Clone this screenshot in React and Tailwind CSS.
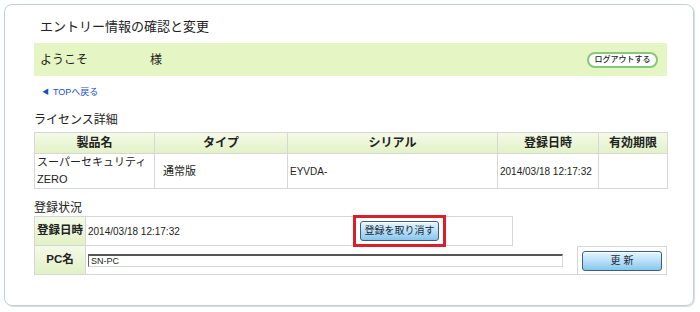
import React from 'react';

const font = { fontFamily: '"Liberation Sans", "Noto Sans CJK JP", sans-serif' };

const cols = [
  { label: '製品名', w: 'w-[120px]' },
  { label: 'タイプ', w: 'w-[133px]' },
  { label: 'シリアル', w: 'w-[210px]' },
  { label: '登録日時', w: 'w-[101px]' },
  { label: '有効期限', w: 'w-[69px]' },
];

const BlueButton = ({ children, className = '' }) => (
  <button
    className={`h-[20px] rounded-[3px] border border-[#3d5f7e] bg-gradient-to-b from-[#e4f4ff] via-[#b9e0f8] to-[#86c6ec] text-[10px] leading-none text-[#1d2a36] shadow-[inset_0_1px_0_#ffffff] ${className}`}
  >
    {children}
  </button>
);

export default function App() {
  return (
    <div className="min-h-[312px] w-[700px] bg-white pl-[4px] pt-[4px] text-[#222]" style={font}>
      <div className="h-[302px] w-[690px] rounded-[8px] border border-[#c3cfd7] pl-[29px] pt-[12px] shadow-[1px_1px_1px_#d5dde2]">
        {/* heading */}
        <h1 className="pl-[6px] text-[13px] leading-[20px]">エントリー情報の確認と変更</h1>

        {/* welcome bar */}
        <div className="mt-[6px] flex h-[33px] w-[633px] items-center justify-between bg-[#e5f5c4] pl-[6px] pr-[9px]">
          <div className="flex text-[12px]">
            <span className="w-[110px]">ようこそ</span>
            <span>様</span>
          </div>
          <button className="flex h-[16px] w-[71px] items-center justify-center rounded-full border-2 border-[#86c77e] bg-white text-[8px] font-medium leading-none text-[#222]">
            ログアウトする
          </button>
        </div>

        {/* back link */}
        <a className="mt-[10px] flex items-center gap-[4px] pl-[8px] text-[9px] leading-[12px] text-[#1b4fbf]">
          <span className="text-[7px]">◀</span>
          <span>TOPへ戻る</span>
        </a>

        {/* license */}
        <h2 className="mt-[14px] text-[12px] leading-[16px]">ライセンス詳細</h2>
        <table className="mt-[4px] w-[633px] table-fixed border-collapse border border-[#d6d6d6] text-[11px]">
          <thead>
            <tr className="h-[21px] bg-gradient-to-b from-[#f4fae8] to-[#e2f1c5]">
              {cols.map((c) => (
                <th key={c.label} className={`${c.w} border border-[#d6d6d6] p-0 text-center text-[12px] font-bold`}>
                  {c.label}
                </th>
              ))}
            </tr>
          </thead>
          <tbody>
            <tr className="h-[35px]">
              <td className="border border-[#d6d6d6] pl-[2px] leading-[17px]">
                スーパーセキュリティ
                <br />
                ZERO
              </td>
              <td className="border border-[#d6d6d6] pl-[8px]">通常版</td>
              <td className="border border-[#d6d6d6] pl-[2px] text-[10px]">EYVDA-</td>
              <td className="border border-[#d6d6d6] pl-[2px] text-[10px]">2014/03/18 12:17:32</td>
              <td className="border border-[#d6d6d6]"></td>
            </tr>
          </tbody>
        </table>

        {/* registration */}
        <h2 className="mt-[11px] text-[12px] leading-[16px]">登録状況</h2>
        <div className="w-[633px] text-[11px]">
          <div className="flex h-[30px]">
            <div className="flex w-[52px] items-center justify-center border border-[#d6d6d6] bg-gradient-to-b from-[#f4fae8] to-[#e2f1c5] text-[11.5px] font-bold">
              登録日時
            </div>
            <div className="flex w-[427px] items-center border border-l-0 border-[#d6d6d6] pl-[2px]">
              <span className="w-[272px] text-[10px]">2014/03/18 12:17:32</span>
              <div className="relative">
                <BlueButton className="w-[79px]">登録を取り消す</BlueButton>
                <div className="pointer-events-none absolute -bottom-[6px] -left-[7px] -right-[7px] -top-[6px] border-[3px] border-[#d81f2a]"></div>
              </div>
            </div>
          </div>
          <div className="flex h-[29px]">
            <div className="flex w-[52px] items-center justify-center border border-t-0 border-[#d6d6d6] bg-gradient-to-b from-[#f4fae8] to-[#e2f1c5] text-[11.5px] font-bold">
              PC名
            </div>
            <div className="flex w-[491px] items-center border-b border-[#d6d6d6] pl-[2px]">
              <input
                readOnly
                value="SN-PC"
                className="h-[13px] w-[475px] border border-b-[#d8d8d8] border-l-[#666] border-r-[#d8d8d8] border-t-[#555] border-t-2 bg-white pl-[2px] text-[9px] leading-none text-[#222] outline-none"
                style={font}
              />
            </div>
            <div className="flex w-[90px] items-center justify-center border border-[#d6d6d6]">
              <BlueButton className="w-[80px] pl-[3px] tracking-[3px]">更新</BlueButton>
            </div>
          </div>
        </div>
      </div>
    </div>
  );
}
